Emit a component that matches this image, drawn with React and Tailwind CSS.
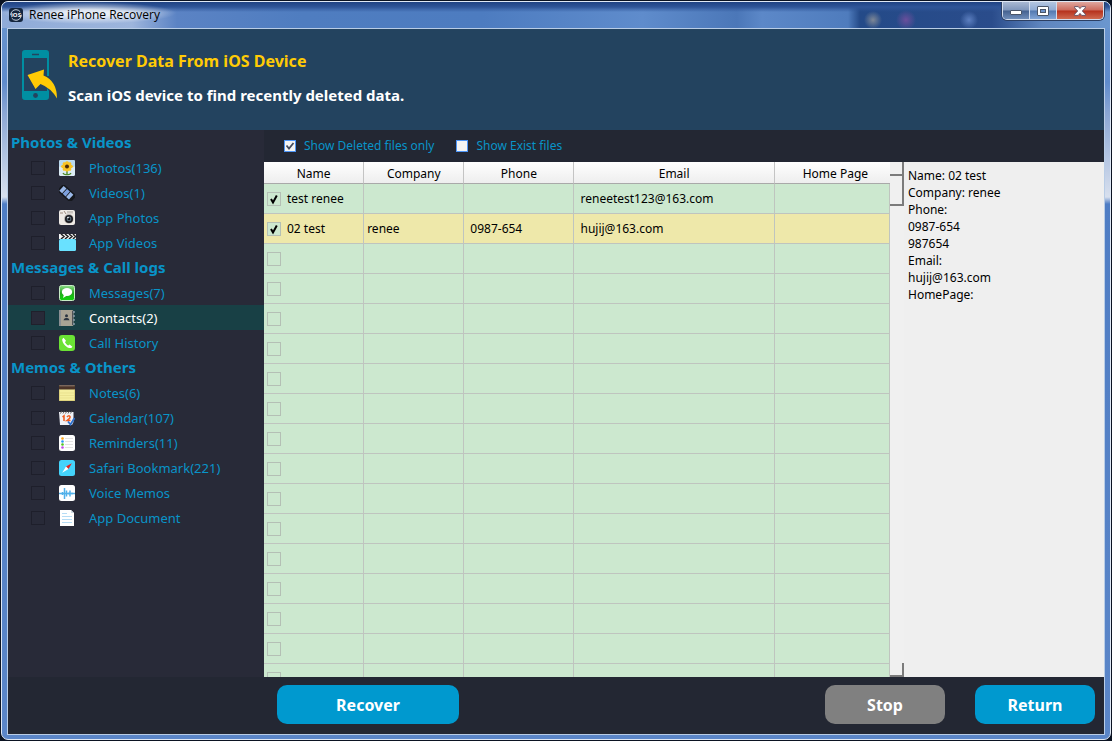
import React, { useState } from "react";

const SunflowerIcon = () => (
  <svg viewBox="0 0 16 16" className="size-4">
    <rect width="16" height="16" rx="1.5" fill="#dcecf5" />
    <rect width="16" height="7" rx="1.5" fill="#b9d9ef" />
    <path d="M8 10v5M8 14.500q-3 .5-4-1.500M8 14.500q3 .5 4-1.500" stroke="#4f8a2a" strokeWidth="1.4" fill="none" />
    <g fill="#f9c326">
      <ellipse cx="8" cy="6.5" rx="6" ry="2.5" />
      <ellipse cx="8" cy="6.5" rx="5.6" ry="2.5" transform="rotate(45 8 6.5)" />
      <ellipse cx="8" cy="6.5" rx="5.2" ry="2.5" transform="rotate(90 8 6.5)" />
      <ellipse cx="8" cy="6.5" rx="5.6" ry="2.5" transform="rotate(135 8 6.5)" />
    </g>
    <circle cx="8" cy="6.6" r="2" fill="#4a2a0a" />
  </svg>
);

const FilmIcon = () => (
  <svg viewBox="0 0 16 16" className="size-4">
    <g transform="rotate(42 8 8)">
      <rect x="-1" y="3.5" width="18" height="9.500" fill="#15171c" />
      <rect x="0.8" y="5" width="3.8" height="6.500" fill="#9bb9ea" />
      <rect x="5.4" y="5" width="3.8" height="6.500" fill="#7da0df" />
      <rect x="10" y="5" width="3.8" height="6.500" fill="#9bb9ea" />
    </g>
  </svg>
);

const CameraIcon = () => (
  <svg viewBox="0 0 16 16" className="size-4">
    <rect width="16" height="15" rx="2" fill="#efebe6" />
    <path d="M1 3h3M5 1l2 3" stroke="#a08c80" strokeWidth="1" />
    <rect x="8" y="1" width="6" height="2.5" fill="#c9c4bf" />
    <circle cx="9.8" cy="8.9" r="4.800" fill="#b9b4b0" />
    <circle cx="10" cy="8.9" r="4" fill="#1b1b20" />
    <circle cx="10" cy="8.9" r="2.4" fill="#5d6f7d" />
    <circle cx="10" cy="8.9" r="1.3" fill="#101216" />
    <circle cx="9" cy="7.6" r="0.8" fill="#fff" />
  </svg>
);

const ClapperIcon = () => (
  <svg viewBox="0 0 17 17" className="size-[17px]">
    <rect x="0" y="0" width="17" height="5" fill="#f4f4f4" />
    <path d="M2 0l3 2.500-3 2.500M6 0l3 2.500-3 2.500M10 0l3 2.500-3 2.500M14 0l2.500 2.500-2.500 2.500" fill="none" stroke="#222" strokeWidth="1.5" />
    <rect x="0" y="5" width="17" height="12" rx="1.5" fill="#69e1ff" />
  </svg>
);

const MessageIcon = () => (
  <svg viewBox="0 0 16 16" className="size-4">
    <defs>
      <linearGradient id="msg" x1="0" y1="0" x2="0" y2="1">
        <stop offset="0" stopColor="#8fdc8a" />
        <stop offset="0.5" stopColor="#22a81c" />
        <stop offset="1" stopColor="#0fd60b" />
      </linearGradient>
    </defs>
    <rect x="0.5" y="0.5" width="15" height="15" rx="2" fill="url(#msg)" stroke="#c8ecc6" />
    <ellipse cx="8" cy="7" rx="5.2" ry="4" fill="#fff" />
    <path d="M5 9l-1 4 4-2.500z" fill="#fff" />
  </svg>
);

const ContactIcon = () => (
  <svg viewBox="0 0 16 16" className="size-4">
    <rect x="0" y="0" width="14.500" height="16" rx="1.500" fill="#a9a394" />
    <rect x="0" y="0" width="2" height="16" fill="#8a8f93" />
    <path d="M13.500 1v14" stroke="#4d5258" strokeWidth="1" />
    <path d="M15 1v2M15 5v2M15 9v2M15 13v2" stroke="#8fa0ae" strokeWidth="1.400" />
    <circle cx="7.500" cy="5.800" r="1.500" fill="#2b3440" />
    <path d="M4.500 10.300q.3-2 2.200-2.300h1.600q1.900.3 2.200 2.300z" fill="#2b3440" />
  </svg>
);

const PhoneIcon = () => (
  <svg viewBox="0 0 16 16" className="size-4">
    <rect width="16" height="16" rx="3" fill="#6be234" />
    <path d="M4.600 2.700 3.300 4c-.5 2 1 4.700 2.800 6.400 1.800 1.800 4.200 3.100 6.200 2.600l1.100-1.300-2.700-2.100-1.500 1C8 10 6.400 8.200 6 7.200l1-1.400z" fill="#fff" />
  </svg>
);

const NotesIcon = () => (
  <svg viewBox="0 0 16 16" className="size-4">
    <rect width="16" height="16" rx="1.500" fill="#f5ef9f" />
    <path d="M0 4.500V1.500Q0 0 1.500 0h13Q16 0 16 1.500v3z" fill="#4d3428" />
    <path d="M1 .8h14" stroke="#8d7d72" strokeWidth="1" />
    <path d="M1 8h14M1 10.500h14M1 13h14" stroke="#e2d987" strokeWidth=".6" />
    <path d="M.5 5v10.500h15V5" fill="none" stroke="#ddd27c" />
  </svg>
);

const CalendarIcon = () => (
  <svg viewBox="0 0 16 16" className="size-4">
    <path d="M0 2h14.500v10l-1.500 3H1z" fill="#eff1f6" />
    <path d="M1.500 3.500 3 .8M4 3.500 5.500.8M6.500 3.500 8 .8M9 3.500 10.500.8M11.500 3.500 13 .8" stroke="#555" strokeWidth=".9" />
    <path d="M3.500 7l1.500-1.200V11M8 7q1.500-2 3-.5.700 1.500-3 4h3.500" fill="none" stroke="#ee5a1c" strokeWidth="1.500" />
    <path d="M9 11.500l2.500 3L15.500 8" fill="none" stroke="#2d6fcb" strokeWidth="1.800" />
  </svg>
);

const RemindersIcon = () => (
  <svg viewBox="0 0 16 16" className="size-4">
    <rect width="16" height="16" rx="2.500" fill="#fff" />
    <path d="M6 3.500h8M6 6.500h8M6 9.500h8M6 12.500h8" stroke="#e3e3e3" strokeWidth="1" />
    <circle cx="3.500" cy="3.500" r="1.300" fill="#f8a11c" />
    <circle cx="3.500" cy="6.500" r="1.300" fill="#2d96f0" />
    <circle cx="3.500" cy="9.500" r="1.300" fill="#51c61f" />
    <circle cx="3.500" cy="12.500" r="1.300" fill="#c44be8" />
  </svg>
);

const SafariIcon = () => (
  <svg viewBox="0 0 16 16" className="size-4">
    <rect width="16" height="16" rx="2.500" fill="#44d3fb" />
    <path d="M12.800 3.200 9.500 9 7 6.500z" fill="#e8201c" />
    <path d="M3.200 12.800 7 6.500 9.500 9z" fill="#fff" />
  </svg>
);

const VoiceIcon = () => (
  <svg viewBox="0 0 16 16" className="size-4">
    <rect width="16" height="16" rx="2.500" fill="#fff" />
    <path d="M0 8.500h16M3.500 7v3M5.500 3v11M7.500 5.500v6M9.500 7.500v2M11 5.500v6M13 7.500v2" stroke="#51b1ea" strokeWidth="1.500" />
  </svg>
);

const DocumentIcon = () => (
  <svg viewBox="0 0 16 16" className="size-4">
    <path d="M1 0h11l3 3v13H1z" fill="#fff" />
    <path d="M12 0v3h3z" fill="#cfdbe4" />
    <path d="M3 3.500h5M3 6.500h10M3 9.500h10M3 12.500h10" stroke="#b5dcf5" strokeWidth="1" />
  </svg>
);

const groups = [
  {
    title: "Photos & Videos",
    items: [
      { label: "Photos(136)", Icon: SunflowerIcon },
      { label: "Videos(1)", Icon: FilmIcon },
      { label: "App Photos", Icon: CameraIcon },
      { label: "App Videos", Icon: ClapperIcon },
    ],
  },
  {
    title: "Messages & Call logs",
    items: [
      { label: "Messages(7)", Icon: MessageIcon },
      { label: "Contacts(2)", Icon: ContactIcon },
      { label: "Call History", Icon: PhoneIcon },
    ],
  },
  {
    title: "Memos & Others",
    items: [
      { label: "Notes(6)", Icon: NotesIcon },
      { label: "Calendar(107)", Icon: CalendarIcon },
      { label: "Reminders(11)", Icon: RemindersIcon },
      { label: "Safari Bookmark(221)", Icon: SafariIcon },
      { label: "Voice Memos", Icon: VoiceIcon },
      { label: "App Document", Icon: DocumentIcon },
    ],
  },
];

const contacts = [
  { name: "test renee", company: "", phone: "", email: "reneetest123@163.com", home: "" },
  { name: "02 test", company: "renee", phone: "0987-654", email: "hujij@163.com", home: "" },
];
const emptyRows = Array.from({ length: 15 }, () => ({ name: "", company: "", phone: "", email: "", home: "" }));
const rows = [...contacts, ...emptyRows];

const details = ["Name: 02 test", "Company: renee", "Phone:", "0987-654", "987654", "Email:", "hujij@163.com", "HomePage:"];

function TitleBar() {
  return (
    <div className="flex h-[26px] shrink-0 items-start justify-between bg-[radial-gradient(circle_at_871px_18px,#7d8796_0px,transparent_9px),radial-gradient(circle_at_904px_18px,#6a4f9c_0px,transparent_10px),radial-gradient(circle_at_967px_18px,#5c7fc0_0px,transparent_9px),linear-gradient(to_bottom,#1f4283_0px,#2f5598_5px,transparent_10px),linear-gradient(to_right,#8fabd8_0px,#9db5dc_130px,#5b83c4_175px,#4f7dc0_300px,#4d7cc0_480px,#5f8ccc_640px,#4b77b8_735px,#5c88c8_760px,#4f7cbd_846px,#244a88_858px,#2a4c8b_990px,#5f86bf_1040px,#6b97cf_100%)]">
      <div className="flex items-center gap-1.5 bg-[radial-gradient(closest-side,#ffffffc0_30%,transparent)] pt-1 pr-4 pl-[7px]">
        <svg viewBox="0 0 14 14" className="size-3.5">
          <rect width="14" height="14" rx="3" fill="#14263f" />
          <circle cx="7" cy="7" r="5.300" fill="none" stroke="#c9d3df" strokeWidth="1" strokeDasharray="13 3" />
          <text x="7" y="9.200" textAnchor="middle" fontSize="6" fontWeight="700" fontFamily="Open Sans, sans-serif" fill="#fff">iOS</text>
        </svg>
        <span className="font-['Open_Sans',sans-serif] text-xs leading-[18px] text-black">Renee iPhone Recovery</span>
      </div>
      <div className="mr-1.5 flex h-[18px] overflow-hidden rounded-b-[5px] border border-t-0 border-[#d3dded] shadow-[0_0_0_1px_#2c3f63]">
        <button aria-label="Minimize" className="flex w-[27px] items-end justify-center border-r border-[#d3dded] bg-[linear-gradient(#a9b9d3,#7f96bb_48%,#44618f_52%,#6f8db9)] pb-[3px]">
          <svg viewBox="0 0 12 6" className="h-1.5 w-3"><rect x=".5" y=".5" width="11" height="4" rx=".5" fill="#fff" stroke="#4a5568" /></svg>
        </button>
        <button aria-label="Maximize" className="flex w-[27px] items-center justify-center border-r border-[#d3dded] bg-[linear-gradient(#b4c6e0,#8fabd4_48%,#5379b0_52%,#82a5d6)]">
          <svg viewBox="0 0 12 10" className="h-2.5 w-3">
            <rect x=".5" y=".5" width="11" height="9" rx=".5" fill="#fff" stroke="#4a5568" />
            <rect x="3.500" y="3.500" width="5" height="3" fill="#6d94cc" stroke="#4a5568" />
          </svg>
        </button>
        <button aria-label="Close" className="flex w-[46px] items-center justify-center bg-[linear-gradient(#dfa79f,#cc6a5c_48%,#b5301c_52%,#cf6a50)]">
          <svg viewBox="0 0 12 10" className="h-2.5 w-3">
            <path d="M.6.6h3.700L6 2.600 7.700.6h3.700v1.200L8.300 5l3.100 3.200v1.200H7.700L6 7.400 4.300 9.400H.6V8.200L3.700 5 .6 1.800z" fill="#fff" stroke="#5b4a5e" strokeWidth=".9" />
          </svg>
        </button>
      </div>
    </div>
  );
}

function Header() {
  return (
    <header className="flex h-[101px] shrink-0 items-start bg-[#23435f] pt-[21px] pl-3.5">
      <svg viewBox="0 0 36 50" className="h-[50px] w-9 shrink-0">
        <path d="M3 0h21q3 0 3 3v23h-2V8H2v33h23v-3l2 3v6q0 3-3 3H3q-3 0-3-3V3Q0 0 3 0z" fill="#008fa2" />
        <path d="M10 4.500h7" stroke="#23435f" strokeWidth="1.600" />
        <circle cx="13.500" cy="45.500" r="2.400" fill="#23435f" />
        <path d="M5.500 25 22 19.500l-.5 6Q35 31 35 48.500 29 38 18.500 34L13.500 39z" fill="#ffcb05" />
      </svg>
      <div className="flex flex-col gap-3 pl-2.5">
        <h1 className="text-base leading-[22px] font-bold text-[#ffcb05]">Recover Data From iOS Device</h1>
        <p className="text-[15px] leading-[22px] font-bold text-white">Scan iOS device to find recently deleted data.</p>
      </div>
    </header>
  );
}

function Sidebar({ selected, onSelect }) {
  return (
    <nav className="w-64 shrink-0 bg-[#282a38]">
      {groups.map((group) => (
        <section key={group.title}>
          <h2 className="pl-[3px] text-[15px] leading-[25px] font-bold text-[#0994c8]">{group.title}</h2>
          <ul>
            {group.items.map(({ label, Icon }) => {
              const active = label === selected;
              return (
                <li key={label} className={active ? "flex h-[25px] items-center bg-[#184045] pl-[23px]" : "flex h-[25px] items-center pl-[23px]"}>
                  <input
                    type="checkbox"
                    aria-label={label}
                    className={active ? "size-3.5 appearance-none border border-[#20202b] bg-[#282a38] checked:bg-[#0c94cb]" : "size-3.5 appearance-none border border-[#1e1f2b] checked:bg-[#0c94cb]"}
                  />
                  <button onClick={() => onSelect(label)} className="flex flex-1 items-center text-left">
                    <span className="ml-3.5 w-[17px]">
                      <Icon />
                    </span>
                    <span className={active ? "pt-0.5 pl-[13px] text-[13px] leading-[23px] text-white" : "pt-0.5 pl-[13px] text-[13px] leading-[23px] text-[#0994c8]"}>{label}</span>
                  </button>
                </li>
              );
            })}
          </ul>
        </section>
      ))}
    </nav>
  );
}

function Filter({ label, defaultChecked }) {
  return (
    <label className="flex items-center gap-2 text-xs leading-5 text-[#0994c8]">
      <span className="grid size-3">
        <input type="checkbox" defaultChecked={defaultChecked} className="peer col-start-1 row-start-1 size-3 appearance-none border border-[#4f96f7] bg-[#f4f4f4]" />
        <svg viewBox="0 0 12 12" className="pointer-events-none invisible col-start-1 row-start-1 size-3 peer-checked:visible">
          <path d="M2.500 5.500 5 8.500 9.500 3" fill="none" stroke="#444b5e" strokeWidth="1.800" />
        </svg>
      </span>
      {label}
    </label>
  );
}

function RowCheck({ label, defaultChecked }) {
  return (
    <span className="grid size-3.5 shrink-0">
      <input type="checkbox" aria-label={label} defaultChecked={defaultChecked} className="peer col-start-1 row-start-1 size-3.5 appearance-none border border-[#b4bfb5] bg-[#cce8cf]" />
      <svg viewBox="0 0 14 14" className="pointer-events-none invisible col-start-1 row-start-1 size-3.5 peer-checked:visible">
        <path d="M4 7 6 10.500 9.800 3.500" fill="none" stroke="#000" strokeWidth="2" />
      </svg>
    </span>
  );
}

const th = "border-r border-r-[#c4c4c4] pt-0.5 font-normal";
const td = "overflow-hidden border-r border-b border-[#bfc4bf] whitespace-nowrap";

function ContactTable() {
  return (
    <div className="min-w-0 flex-1 overflow-hidden bg-[#cce8cf]">
      <table className="w-full table-fixed border-separate border-spacing-0 text-xs text-black">
        <colgroup>
          <col className="w-[16%]" />
          <col className="w-[16%]" />
          <col className="w-[17.6%]" />
          <col className="w-[32%]" />
          <col />
        </colgroup>
        <thead>
          <tr className="h-[22px] bg-[linear-gradient(#ffffff,#ededed)] *:border-b *:border-b-[#a9a9a9]">
            <th className={th}>Name</th>
            <th className={th}>Company</th>
            <th className={th}>Phone</th>
            <th className={th}>Email</th>
            <th className="pt-0.5 pl-1.5 font-normal">Home Page</th>
          </tr>
        </thead>
        <tbody>
          {rows.map((row, i) => (
            <tr key={i} className={i === 1 ? "h-[30px] bg-[#eee8aa]" : "h-[30px]"}>
              <td className={td}>
                <div className="flex items-center gap-1.5 pl-[3px]">
                  <RowCheck label={row.name || "Row " + (i + 1)} defaultChecked={i < 2} />
                  {row.name}
                </div>
              </td>
              <td className={td + " pl-[3px]"}>{row.company}</td>
              <td className={td + " pl-1.5"}>{row.phone}</td>
              <td className={td + " pl-1.5"}>{row.email}</td>
              <td className={td + " pl-1.5"}>{row.home}</td>
            </tr>
          ))}
        </tbody>
      </table>
    </div>
  );
}

const bevel = "w-full border-r-2 border-b-2 border-[#7b7b7b] bg-[#f0f0f0]";

function ScrollBar() {
  return (
    <div className="flex w-3.5 shrink-0 flex-col bg-[#f0f0f0]">
      <button aria-label="Scroll up" className={bevel + " h-3.5"} />
      <div className={bevel + " h-[30px]"} />
      <div className="flex-1" />
      <button aria-label="Scroll down" className={bevel + " h-3.5"} />
    </div>
  );
}

const action = "h-[39px] rounded-[10px] text-base font-bold text-white";

export default function App() {
  const [selected, setSelected] = useState("Contacts(2)");
  return (
    <div className="h-screen min-h-[500px] bg-[#0b1322] font-['Noto_Sans',sans-serif]">
      <div className="flex h-full flex-col border border-[#0b1322]">
        <div className="flex min-h-0 flex-1 flex-col overflow-hidden rounded-[7px] border border-[#dfe8f5] bg-[linear-gradient(to_bottom,#6b97cf_0px,#5f8bcb_80px,#8aa6d4_110px,#d8e0ee_195px,#4f7dc4_202px,#5b86c8_100%)]">
          <TitleBar />
          <div className="mx-[5px] mb-1 flex min-h-0 flex-1 flex-col border border-[#b9cde6]">
            <Header />
            <div className="flex min-h-0 flex-1">
              <Sidebar selected={selected} onSelect={setSelected} />
              <main className="flex min-w-0 flex-1 flex-col">
                <div className="flex h-8 shrink-0 items-center gap-[22px] bg-[#232733] pl-5">
                  <Filter label="Show Deleted files only" defaultChecked />
                  <Filter label="Show Exist files" />
                </div>
                <div className="flex min-h-0 flex-1">
                  <ContactTable />
                  <ScrollBar />
                  <aside className="w-[200px] shrink-0 bg-[#efefef] pt-[5px] pl-1 text-xs text-black">
                    {details.map((line) => (
                      <p key={line} className="leading-[17px]">{line}</p>
                    ))}
                  </aside>
                </div>
              </main>
            </div>
            <footer className="flex h-[57px] shrink-0 items-start bg-[#232733] pt-2 pr-[9px] pl-[269px]">
              <button className={action + " w-[182px] bg-[#0099cf]"}>Recover</button>
              <div className="ml-auto flex gap-[30px]">
                <button className={action + " w-[120px] bg-[#808080]"}>Stop</button>
                <button className={action + " w-[120px] bg-[#0099cf]"}>Return</button>
              </div>
            </footer>
          </div>
        </div>
      </div>
    </div>
  );
}
